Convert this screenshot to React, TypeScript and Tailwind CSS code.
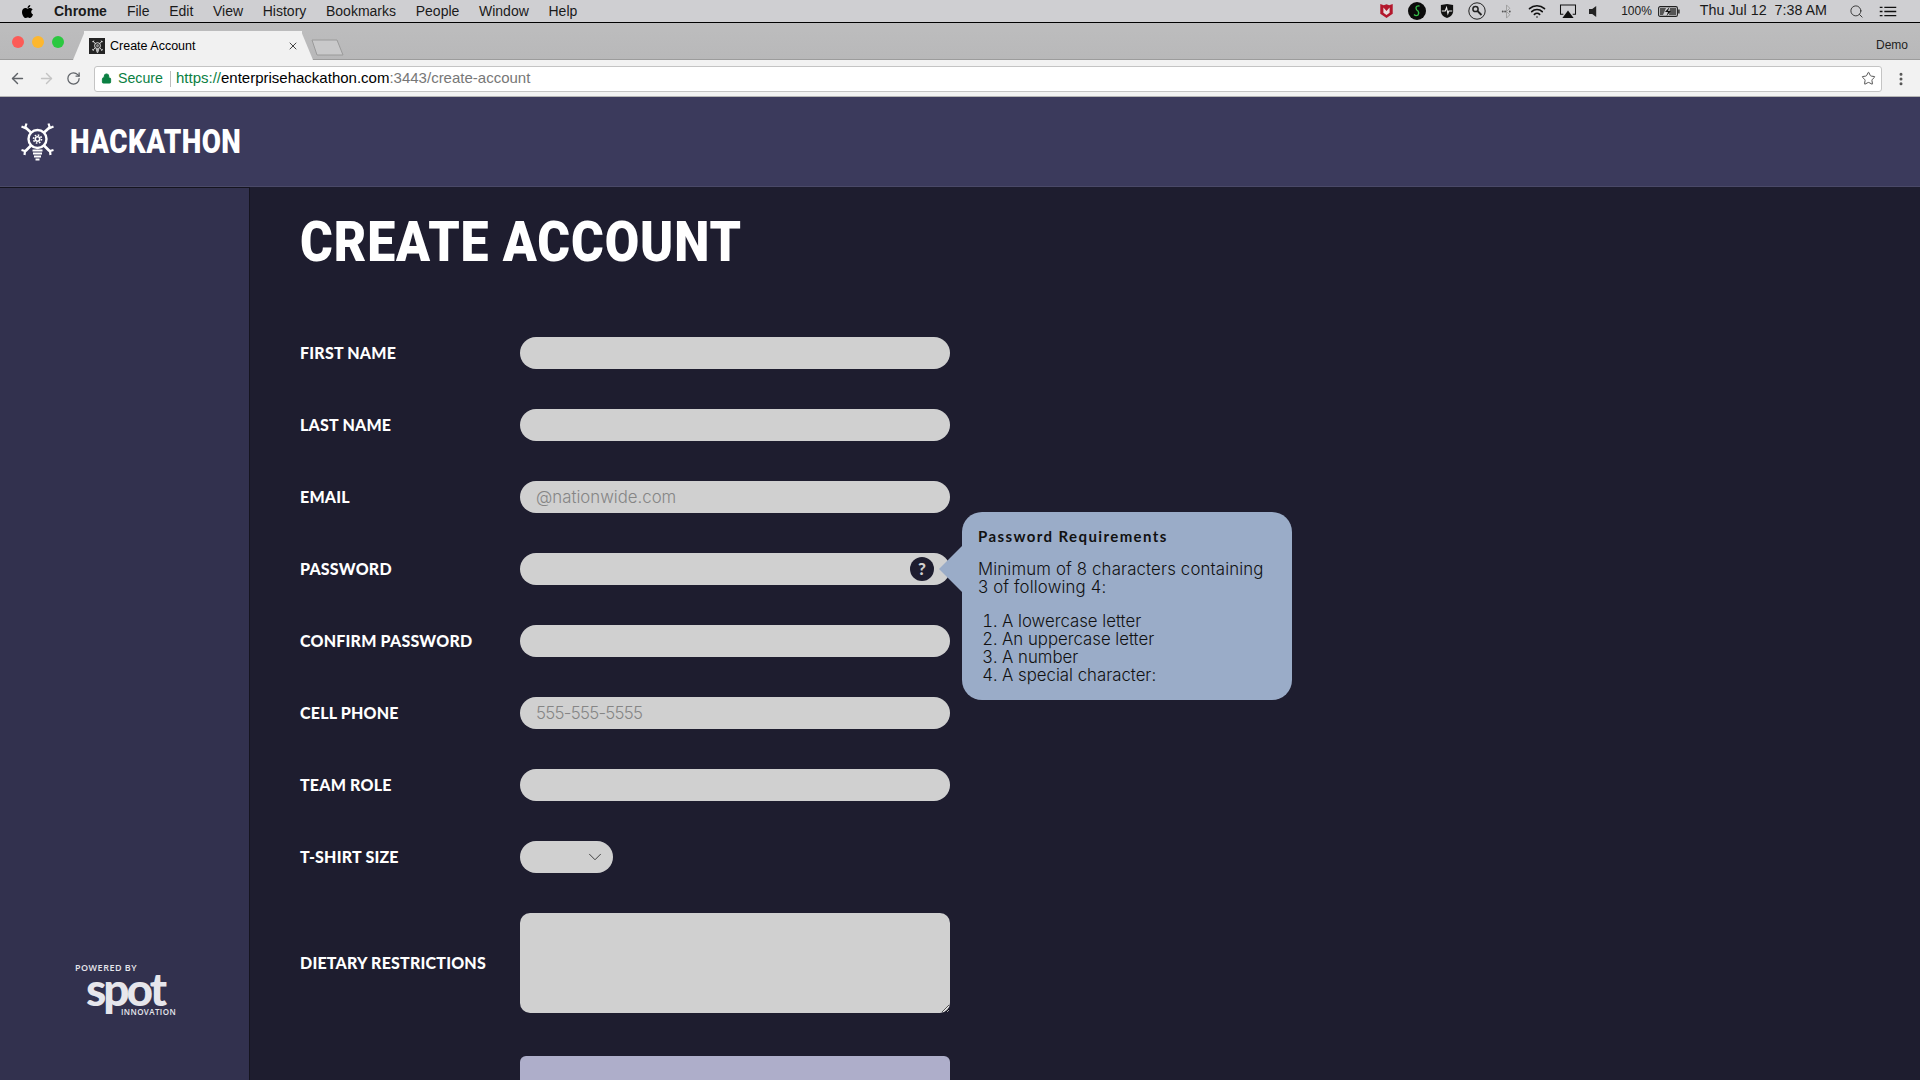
import { ArrowLeft, ArrowRight, ChevronDown, EllipsisVertical, Lock, RotateCw, Search, Star, Wifi, X } from 'lucide-react';
import { FaApple } from 'react-icons/fa';

const menus = ['File', 'Edit', 'View', 'History', 'Bookmarks', 'People', 'Window', 'Help'];

const inputClass =
  'h-8 w-[430px] rounded-2xl bg-[#d0d0d0] px-4 text-[16.8px] font-light text-black outline-none placeholder:text-[#858585]';

function HackathonLogo({ className }: { className?: string }) {
  return (
    <svg viewBox="0 0 35 39" className={className} fill="none" stroke="#fff">
      <circle cx="17.5" cy="17" r="9" strokeWidth="2.4" />
      <circle cx="17.5" cy="17" r="2.2" strokeWidth="1.6" />
      <circle cx="17.5" cy="17" r="4" strokeWidth="1.6" strokeDasharray="1.6 1.5" />
      <path d="M5.5 5.5 L11.5 11 M29.5 5.5 L23.5 11 M5.5 29 L11 23.5 M29.5 29 L24 23.5" strokeWidth="2.6" />
      <path d="M1.5 4.5 L5 6 L6.5 1.5 M33.5 4.5 L30 6 L28.5 1.5 M1.5 28 L5 29 L4.5 33 M33.5 28 L30 29 L30.5 33" strokeWidth="2.2" />
      <path d="M12.5 28.5 H22.5 M13 31.5 H22 M14 34.5 H21 M15.5 37.5 H19.5" strokeWidth="2" />
    </svg>
  );
}

function MenuBar() {
  return (
    <div className="flex h-[22px] items-center bg-[#cfcfd2] font-['Liberation_Sans',sans-serif] text-[14px] text-[#1a1a1a]">
      <FaApple className="ml-[20px] h-[15px] w-[15px] text-black" />
      <span className="ml-[19px] font-bold">Chrome</span>
      <div className="ml-[20px] flex gap-[19.7px]">
        {menus.map((m) => (
          <span key={m}>{m}</span>
        ))}
      </div>
      <div className="ml-auto flex items-center">
        <svg viewBox="0 0 16 18" className="h-[16px] w-[15px]">
          <path d="M1 1 L5 2.5 L8 1.5 L11 2.5 L15 1 V12 L8 17 L1 12 Z" fill="#b3172c" />
          <path d="M4.5 5 L8 9 L11.5 5 V11 L8 13.5 L4.5 11 Z" fill="#e8dede" />
        </svg>
        <svg viewBox="0 0 18 18" className="ml-[14px] h-[18px] w-[18px]">
          <circle cx="9" cy="9" r="9" fill="#0b0b0b" />
          <path d="M11.5 4 Q8 3.5 8 6 Q8 8 10 9 Q11.5 11 10 13 Q8 14.5 6 12.5" fill="none" stroke="#35c24a" strokeWidth="1.3" />
        </svg>
        <svg viewBox="0 0 16 18" className="ml-[14px] h-[16px] w-[14px]">
          <path d="M1 2 L8 1 L15 2 V10 Q14 15 8 17 Q2 15 1 10 Z" fill="#111" />
          <path d="M2 9 H6 L7.5 5 L9 12 L10 9 H14" fill="none" stroke="#eee" strokeWidth="1.2" />
        </svg>
        <svg viewBox="0 0 18 18" className="ml-[14px] h-[18px] w-[18px]" fill="none" stroke="#222">
          <circle cx="9" cy="9" r="8.2" strokeWidth="1" />
          <circle cx="7.5" cy="7" r="2.6" strokeWidth="1.5" />
          <path d="M9.5 9 L13.5 13" strokeWidth="1.8" />
        </svg>
        <svg viewBox="0 0 11 16" className="ml-[15px] h-[15px] w-[11px]" fill="none" stroke="#999" strokeWidth="0.9">
          <path d="M5.5 1 V15 L9 11.5 L5.5 8 L9 4.5 Z" />
          <circle cx="1.5" cy="8" r="1" fill="#555" stroke="none" />
          <circle cx="4" cy="8" r="1" fill="#555" stroke="none" />
          <circle cx="9" cy="8" r="1" fill="#555" stroke="none" />
        </svg>
        <Wifi className="ml-[15px] h-[18px] w-[20px] text-[#111]" strokeWidth={2.2} />
        <svg viewBox="0 0 18 16" className="ml-[12px] h-[15px] w-[18px]">
          <path d="M4 11 H1 V1 H17 V11 H14" fill="none" stroke="#111" strokeWidth="1.1" />
          <path d="M9 7 L15 15 H3 Z" fill="#111" />
        </svg>
        <svg viewBox="0 0 10 14" className="ml-[12px] h-[13px] w-[8px]">
          <path d="M0 4 H4 L9 0 V14 L4 10 H0 Z" fill="#222" />
        </svg>
        <span className="ml-[24px] text-[12px]">100%</span>
        <svg viewBox="0 0 22 11" className="ml-[6px] h-[11px] w-[22px]">
          <rect x="0.6" y="0.6" width="18.8" height="9.8" rx="1.5" fill="none" stroke="#222" strokeWidth="1.1" />
          <path d="M2 2 H8 L5 9 H2 Z M12 2 H18 V9 H11 Z" fill="#555" />
          <path d="M11.5 1 L7 6 H10 L8.5 10 L13 5 H10 Z" fill="#111" />
          <rect x="20.2" y="3.5" width="1.4" height="4" fill="#222" />
        </svg>
        <span className="ml-[20px] text-[14.3px] whitespace-pre">Thu Jul 12  7:38 AM</span>
        <Search className="ml-[22px] h-[15px] w-[15px] text-[#333]" strokeWidth={1.5} />
        <svg viewBox="0 0 18 12" className="ml-[15px] mr-[23px] h-[11px] w-[18px]" stroke="#111" strokeWidth="1.5">
          <path d="M5 1.5 H18 M5 6 H18 M5 10.5 H18 M0 1.5 H3 M0 6 H3 M0 10.5 H3" />
        </svg>
      </div>
    </div>
  );
}

function BrowserChrome() {
  return (
    <div className="font-['Liberation_Sans',sans-serif]">
      <div className="flex h-[38px] border-t border-t-black border-b border-b-[#9c9c9c] bg-gradient-to-b from-[#bdbdbe] to-[#b8b8b9]">
        <div className="ml-[12px] mt-[13px] flex gap-[8px]">
          <span className="h-3 w-3 rounded-full bg-[#fc5b57]" />
          <span className="h-3 w-3 rounded-full bg-[#fdb72f]" />
          <span className="h-3 w-3 rounded-full bg-[#2bc840]" />
        </div>
        <div className="relative ml-[20px] mt-[8px] flex h-[29px] w-[218px] items-center bg-[#f1f1f1] pl-[5px] pt-px text-[12.5px] text-black">
          <span className="absolute -left-[11px] top-0 h-full w-[12px] bg-[#f1f1f1] [clip-path:polygon(100%_0,100%_100%,0_100%)]" />
          <span className="absolute -right-[11px] top-0 h-full w-[12px] bg-[#f1f1f1] [clip-path:polygon(0_0,100%_100%,0_100%)]" />
          <span className="flex h-[16px] w-[16px] items-center justify-center bg-[#232323]">
            <HackathonLogo className="h-[13px] w-[13px]" />
          </span>
          <span className="ml-[5px]">Create Account</span>
          <X className="ml-auto mr-[3px] h-[12px] w-[12px] text-[#444]" strokeWidth={2} />
        </div>
        <svg viewBox="0 0 33 17" className="ml-[9px] mt-[16px] h-[17px] w-[33px]">
          <path d="M1 1 H26 L32 16 H6 Z" fill="#c9c9ca" stroke="#9a9a9a" strokeWidth="1" />
        </svg>
        <span className="ml-auto mr-[12px] mt-[13px] text-[12px] text-[#222]">Demo</span>
      </div>
      <div className="flex h-[37px] items-center border-b border-[#b5b5b5] bg-[#f2f2f2] pt-px">
        <ArrowLeft className="ml-[9px] h-[17px] w-[17px] text-[#5f6368]" strokeWidth={2} />
        <ArrowRight className="ml-[12px] h-[17px] w-[17px] text-[#c4c4c4]" strokeWidth={2} />
        <RotateCw className="ml-[11px] h-[15px] w-[15px] text-[#5f6368]" strokeWidth={2} />
        <div className="ml-[13px] flex h-[26px] w-[1788px] items-center rounded-[3px] border border-[#c4c4c4] bg-white text-[15px]">
          <Lock className="ml-[6px] h-[11px] w-[11px] fill-[#0b8043] text-[#0b8043]" strokeWidth={2} />
          <span className="ml-[6px] text-[14.2px] text-[#0b8043]">Secure</span>
          <span className="ml-[7px] h-[16px] w-px bg-[#bdbdbd]" />
          <span className="ml-[5px] text-[#0b8043]">https://</span>
          <span className="text-black">enterprisehackathon.com</span>
          <span className="text-[#777]">:3443/create-account</span>
          <Star className="ml-auto mr-[5px] h-[15px] w-[15px] text-[#555]" strokeWidth={1.6} />
        </div>
        <EllipsisVertical className="ml-[11px] h-[16px] w-[16px] text-[#555]" strokeWidth={2.5} />
      </div>
    </div>
  );
}

function Sidebar() {
  return (
    <aside className="flex w-[250px] shrink-0 flex-col justify-end border-r border-t border-[#15141f] bg-[#32314e] pb-[63px] pl-[75px] text-[#e6e6ec]">
      <div className="font-['Open_Sans',sans-serif] text-[9px] leading-[10px] font-semibold tracking-[0.5px]">POWERED BY</div>
      <div className="relative ml-[11px] mt-[4px] h-[30px] font-['Lato',sans-serif] text-[46px] leading-[24px] font-black tracking-[-3px]">
        spot
        <svg viewBox="0 0 8 12" className="absolute left-[51px] top-[10px] h-[12px] w-[8px]">
          <path d="M5 0 L0 7 H3 L2 12 L8 4 H5 Z" fill="#32314e" />
        </svg>
      </div>
      <div className="ml-[46px] font-['Open_Sans',sans-serif] text-[8px] leading-[10px] font-semibold tracking-[0.4px]">INNOVATION</div>
    </aside>
  );
}

function Row({ label, children }: { label: string; children: React.ReactNode }) {
  return (
    <div className="flex items-center">
      <label className="w-[220px] shrink-0 font-['Lato',sans-serif] text-[16px] font-black tracking-[0.2px] text-white uppercase">{label}</label>
      {children}
    </div>
  );
}

function PasswordTip() {
  return (
    <>
      <span className="absolute left-[390px] top-[4px] flex h-6 w-6 items-center justify-center rounded-full bg-[#1e1d2f] font-['Lato',sans-serif] text-[17px] font-black text-[#d0d0d0]">?</span>
      <span className="absolute left-[419px] top-[-7px] h-0 w-0 border-y-[23px] border-r-[23px] border-y-transparent border-r-[#9aacc8]" />
      <div className="absolute left-[442px] top-[-41px] h-[188px] w-[330px] rounded-[20px] bg-[#9aacc8] px-4 pt-[15px] font-['Inter',sans-serif] text-[#111]">
        <h3 className="font-['Lato',sans-serif] text-[15px] leading-[18px] font-bold tracking-[1.4px]">Password Requirements</h3>
        <p className="mt-[15px] text-[16.8px] leading-[18px] font-light tracking-[0.15px]">Minimum of 8 characters containing 3 of following 4:</p>
        <ol className="mt-[16px] list-decimal pl-[24px] text-[16.8px] leading-[18px] font-light">
          <li>A lowercase letter</li>
          <li>An uppercase letter</li>
          <li>A number</li>
          <li>A special character:</li>
        </ol>
      </div>
    </>
  );
}

function CreateAccountForm() {
  return (
    <main className="flex-1 bg-[#1e1d2f] pl-[50px]">
      <h1 className="mt-[22px] origin-left scale-x-[0.893] font-['Roboto',sans-serif] text-[56px] leading-[67px] font-black tracking-[1px] text-white">CREATE ACCOUNT</h1>
      <form className="mt-[61px] flex flex-col gap-10 font-['Inter',sans-serif]">
        <Row label="First Name"><input className={inputClass} /></Row>
        <Row label="Last Name"><input className={inputClass} /></Row>
        <Row label="Email"><input className={inputClass} placeholder="@nationwide.com" /></Row>
        <Row label="Password">
          <div className="relative">
            <input className={inputClass} type="password" />
            <PasswordTip />
          </div>
        </Row>
        <Row label="Confirm Password"><input className={inputClass} type="password" /></Row>
        <Row label="Cell Phone"><input className={`${inputClass} tracking-[-0.7px]`} placeholder="555-555-5555" /></Row>
        <Row label="Team Role"><input className={inputClass} /></Row>
        <Row label="T-shirt Size">
          <div className="relative">
            <select className="block h-8 w-[93px] appearance-none rounded-2xl bg-[#d0d0d0] px-4 outline-none" />
            <ChevronDown className="absolute right-[7px] top-[5px] h-[22px] w-[22px] text-[#333]" strokeWidth={1} />
          </div>
        </Row>
        <Row label="Dietary Restrictions">
          <textarea className="block h-[100px] w-[430px] rounded-[10px] bg-[#d0d0d0] outline-none" />
        </Row>
        <button type="button" className="ml-[220px] mt-[3px] h-[50px] w-[430px] shrink-0 rounded-[6px] bg-[#aeaeca]" />
      </form>
    </main>
  );
}

export default function App() {
  return (
    <div className="flex h-screen flex-col overflow-hidden">
      <MenuBar />
      <BrowserChrome />
      <header className="flex h-[90px] shrink-0 items-center border-b border-[#4a4968] bg-[#3b3a5c] pl-[20px]">
        <HackathonLogo className="h-[39px] w-[35px]" />
        <span className="ml-[15px] inline-block origin-left scale-x-[0.83] font-['Roboto',sans-serif] text-[33.5px] leading-none font-black tracking-[0.5px] text-white">HACKATHON</span>
      </header>
      <div className="flex min-h-0 flex-1">
        <Sidebar />
        <CreateAccountForm />
      </div>
    </div>
  );
}
